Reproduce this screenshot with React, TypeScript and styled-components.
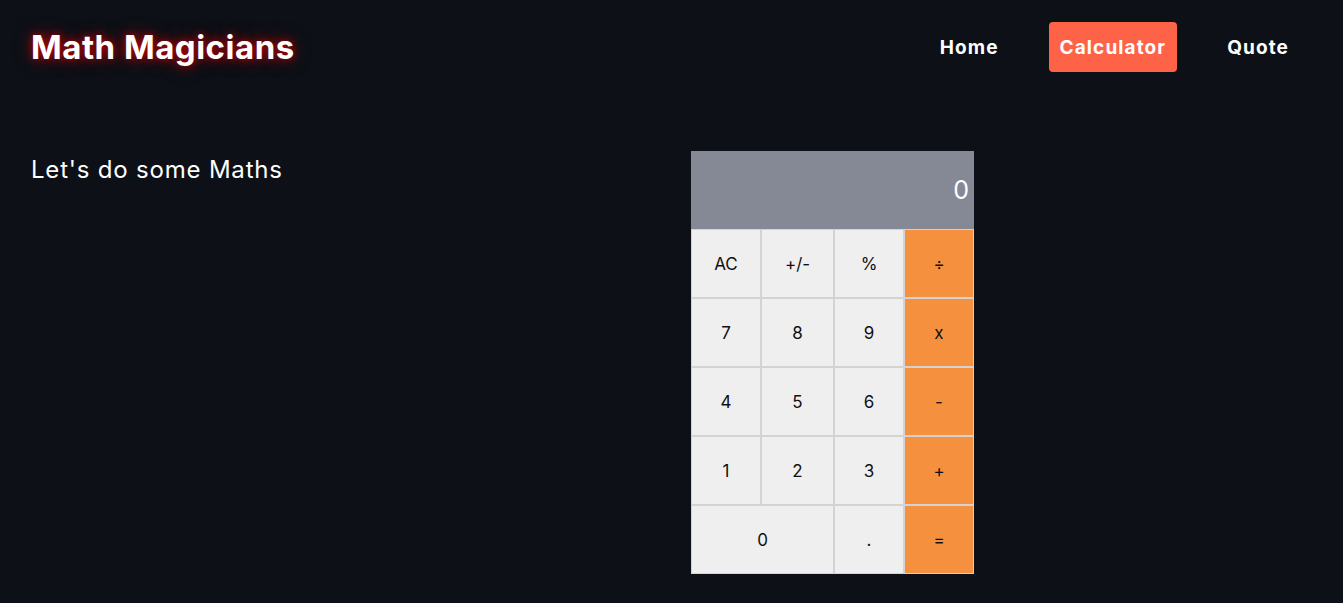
import React from "react";
import styled, { createGlobalStyle } from "styled-components";

const Global = createGlobalStyle`
  html, body { margin: 0; padding: 0; background: #0d1017; }
  body { font-family: Inter, "Open Sans", sans-serif; color: #fff; }
  * { box-sizing: border-box; }
`;

const Header = styled.header`
  display: flex;
  align-items: center;
  justify-content: space-between;
  padding: 22px 43px 0 31px;
  height: 72px;
`;

const Logo = styled.h1`
  margin: 0;
  font-size: 33px;
  font-weight: 700;
  letter-spacing: 0.5px;
  color: #fff;
  text-shadow: 0 0 9px rgba(220, 0, 0, 0.9), 0 0 18px rgba(160, 0, 0, 0.6);
`;

const Nav = styled.nav`
  display: flex;
  gap: 39px;
  align-items: center;
`;

const NavLink = styled.a<{ $active?: boolean }>`
  display: flex;
  align-items: center;
  height: 50px;
  padding: 0 11px;
  border-radius: 4px;
  font-size: 19px;
  font-weight: 700;
  letter-spacing: 1.1px;
  color: #fff;
  text-decoration: none;
  background: ${(p) => (p.$active ? "#ff6347" : "transparent")};
`;

const Main = styled.main`
  display: flex;
  align-items: flex-start;
  padding: 79px 31px 0 31px;
`;

const Intro = styled.p`
  flex: 0 0 660px;
  margin: 0;
  padding-top: 3px;
  font-size: 24px;
  font-weight: 400;
  letter-spacing: 0.8px;
  line-height: 32px;
`;

const Calc = styled.div`
  width: 283px;
  display: grid;
  grid-template-columns: 70px 73px 70px 70px;
  grid-template-rows: 78px repeat(5, 69px);
`;

const Display = styled.div`
  grid-column: 1 / -1;
  background: #858895;
  display: flex;
  align-items: center;
  justify-content: flex-end;
  padding-right: 5px;
  font-size: 25px;
  color: #fff;
`;

const Key = styled.button<{ $op?: boolean; $span?: number }>`
  grid-column: span ${(p) => p.$span ?? 1};
  border: 1px solid #d3d3d3;
  background: ${(p) => (p.$op ? "#f5913e" : "#efefef")};
  color: #111;
  font-family: Inter, "Open Sans", sans-serif;
  font-size: 17px;
  padding: 0;
  margin: 0;
`;

const keys: { label: string; op?: boolean; span?: number }[] = [
  { label: "AC" }, { label: "+/-" }, { label: "%" }, { label: "÷", op: true },
  { label: "7" }, { label: "8" }, { label: "9" }, { label: "x", op: true },
  { label: "4" }, { label: "5" }, { label: "6" }, { label: "-", op: true },
  { label: "1" }, { label: "2" }, { label: "3" }, { label: "+", op: true },
  { label: "0", span: 2 }, { label: "." }, { label: "=", op: true },
];

export default function App() {
  return (
    <>
      <Global />
      <Header>
        <Logo>Math Magicians</Logo>
        <Nav>
          <NavLink href="#">Home</NavLink>
          <NavLink href="#" $active>Calculator</NavLink>
          <NavLink href="#">Quote</NavLink>
        </Nav>
      </Header>
      <Main>
        <Intro>Let's do some Maths</Intro>
        <Calc>
          <Display>0</Display>
          {keys.map((k, i) => (
            <Key key={i} $op={k.op} $span={k.span}>{k.label}</Key>
          ))}
        </Calc>
      </Main>
    </>
  );
}
